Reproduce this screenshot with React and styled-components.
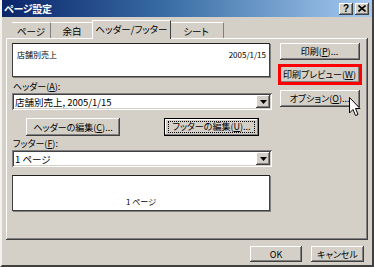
import React from 'react';
import styled, { createGlobalStyle } from 'styled-components';

const Global = createGlobalStyle`
  html, body { margin: 0; padding: 0; background: #D4D0C8; }
  body {
    font-family: "Noto Sans CJK JP", "Liberation Sans", sans-serif;
    font-size: 9px;
    color: #000;
    font-feature-settings: "palt" 1;
  }
  #root { width: 374px; height: 267px; }
`;

const raised = `
  box-shadow: inset -1px -1px #404040, inset 1px 1px #ffffff,
    inset -2px -2px #808080, inset 2px 2px #D4D0C8;
`;
const sunken = `
  box-shadow: inset 1px 1px #808080, inset -1px -1px #ffffff,
    inset 2px 2px #404040, inset -2px -2px #D4D0C8;
`;

const Window = styled.div`
  position: relative;
  width: 374px;
  height: 267px;
  box-sizing: border-box;
  background: #D4D0C8;
  border-left: 2px solid #f4f2ee;
  border-right: 2px solid #404040;
  border-bottom: 2px solid #404040;
  display: flex;
  flex-direction: column;
  overflow: hidden;
`;

const TitleBar = styled.div`
  height: 17px;
  flex: none;
  display: flex;
  align-items: center;
  padding: 0 3px 0 2px;
  background: linear-gradient(to right, #0A246A 0%, #3A6EA5 45%, #A6CAF0 100%);
`;

const Title = styled.div`
  flex: 1;
  color: #fff;
  font-weight: bold;
  font-size: 10px;
  letter-spacing: -0.3px;
`;

const CapButton = styled.div`
  width: 14px;
  height: 12px;
  margin-left: ${p => p.$ml || 1}px;
  background: #D4D0C8;
  ${raised}
  display: flex;
  align-items: center;
  justify-content: center;
  font-family: "Liberation Sans", sans-serif;
  font-weight: bold;
  font-size: 10px;
  line-height: 1;
`;

const TabStrip = styled.div`
  height: 19px;
  margin-top: 2px;
  padding-left: 10px;
  display: flex;
  align-items: flex-end;
  flex: none;
`;

const Tab = styled.div`
  position: relative;
  height: ${p => (p.$active ? 19 : 16)}px;
  width: ${p => p.$w}px;
  box-sizing: border-box;
  display: flex;
  align-items: center;
  justify-content: center;
  font-size: 9.5px;
  background: #D4D0C8;
  border-top: 1px solid #ffffff;
  border-left: ${p => (p.$active ? '1px solid #ffffff' : 'none')};
  border-right: 1px solid ${p => (p.$active ? '#404040' : '#808080')};
  margin-left: ${p => (p.$active ? '-2px' : '0')};
  margin-right: ${p => (p.$active ? '-2px' : '0')};
  margin-bottom: ${p => (p.$active ? '-1px' : '0')};
  z-index: ${p => (p.$active ? 2 : 1)};
  padding-bottom: ${p => (p.$active ? 2 : 0)}px;
`;

const Panel = styled.div`
  margin: 0 4px 0 4px;
  height: 202px;
  flex: none;
  box-sizing: border-box;
  background: #D4D0C8;
  ${raised}
  padding: 5px 5px 0 6px;
  display: flex;
  gap: 5px;
`;

const LeftCol = styled.div`
  width: 260px;
  display: flex;
  flex-direction: column;
`;

const RightCol = styled.div`
  width: 85px;
  display: flex;
  flex-direction: column;
  align-items: center;
`;

const Preview = styled.div`
  height: ${p => p.$h}px;
  width: 258px;
  box-sizing: border-box;
  background: #fff;
  border: 1px solid #404040;
  border-top-color: #202020;
  box-shadow: 1px 1px 0 #808080;
  display: flex;
  justify-content: space-between;
  align-items: ${p => (p.$center ? 'flex-end' : 'flex-start')};
  padding: ${p => (p.$center ? '0 0 3px 0' : '5px 3px 0 4px')};
  font-size: 8px;
  margin-top: ${p => p.$mt || 0}px;
`;

const CenterText = styled.span`
  flex: 1;
  text-align: center;
`;

const Label = styled.div`
  height: ${p => p.$h}px;
  display: flex;
  align-items: flex-end;
  font-size: 9px;
  line-height: 11px;
  padding-left: 1px;
`;

const Combo = styled.div`
  width: 260px;
  height: 17px;
  box-sizing: border-box;
  background: #fff;
  ${sunken}
  display: flex;
  align-items: center;
  padding: 2px 2px 2px 3px;
  margin-top: 1px;
  font-size: 9.5px;
`;

const ComboText = styled.span`
  flex: 1;
`;

const DropBtn = styled.div`
  width: 14px;
  height: 13px;
  background: #D4D0C8;
  ${raised}
  display: flex;
  align-items: center;
  justify-content: center;
`;

const EditRow = styled.div`
  display: flex;
  justify-content: space-between;
  padding: 0 13px 0 14px;
  margin-top: 8px;
`;

const Button = styled.div`
  width: ${p => p.$w}px;
  height: ${p => p.$h || 17}px;
  box-sizing: border-box;
  background: #D4D0C8;
  ${p =>
    p.$default
      ? `border: 1px solid #000; box-shadow: inset -1px -1px #808080, inset 1px 1px #ffffff;`
      : raised}
  display: flex;
  align-items: center;
  justify-content: center;
  font-size: 9px;
  margin-top: ${p => p.$mt || 0}px;
  outline: ${p => (p.$highlight ? '3px solid #ff0000' : 'none')};
  outline-offset: -1px;
  white-space: nowrap;
`;

const Focus = styled.span`
  border: 1px dotted #000;
  padding: 0 3px;
  line-height: 10px;
`;

const Footer = styled.div`
  display: flex;
  justify-content: flex-end;
  gap: 9px;
  padding: 6px 8px 0 0;
`;

const Cursor = styled.svg`
  position: absolute;
  left: 347px;
  top: 97px;
  z-index: 5;
`;

const Arrow = () => (
  <svg width="7" height="4" viewBox="0 0 7 4">
    <path d="M0 0 H7 L3.5 4 Z" fill="#000" />
  </svg>
);

export default function App() {
  return (
    <>
      <Global />
      <Window>
        <TitleBar>
          <Title>ページ設定</Title>
          <CapButton>?</CapButton>
          <CapButton $ml={2}>
            <svg width="8" height="7" viewBox="0 0 8 7">
              <path d="M0.5 0.5 L7.5 6.5 M7.5 0.5 L0.5 6.5" stroke="#000" strokeWidth="1.6" />
            </svg>
          </CapButton>
        </TitleBar>
        <TabStrip>
          <Tab $w={39}>ページ</Tab>
          <Tab $w={43}>余白</Tab>
          <Tab $w={79} $active>ヘッダー/フッター</Tab>
          <Tab $w={55}>シート</Tab>
        </TabStrip>
        <Panel>
          <LeftCol>
            <Preview $h={34}>
              <span>店舗別売上</span>
              <span>2005/1/15</span>
            </Preview>
            <Label $h={15}>ヘッダー(<u>A</u>):</Label>
            <Combo>
              <ComboText>店舗別売上, 2005/1/15</ComboText>
              <DropBtn><Arrow /></DropBtn>
            </Combo>
            <EditRow>
              <Button $w={94} $h={18}>ヘッダーの編集(<u>C</u>)...</Button>
              <Button $w={95} $h={18} $default>
                <Focus>フッターの編集(<u>U</u>)...</Focus>
              </Button>
            </EditRow>
            <Label $h={13}>フッター(<u>F</u>):</Label>
            <Combo>
              <ComboText>1 ページ</ComboText>
              <DropBtn><Arrow /></DropBtn>
            </Combo>
            <Preview $h={36} $mt={8} $center>
              <CenterText>1 ページ</CenterText>
            </Preview>
          </LeftCol>
          <RightCol>
            <Button $w={80}>印刷(<u>P</u>)...</Button>
            <Button $w={80} $mt={6} $highlight>印刷プレビュー(<u>W</u>)</Button>
            <Button $w={80} $mt={7}>オプション(<u>O</u>)...</Button>
          </RightCol>
        </Panel>
        <Footer>
          <Button $w={52} $h={16}>OK</Button>
          <Button $w={53} $h={16}>キャンセル</Button>
        </Footer>
        <Cursor width="12" height="20" viewBox="0 0 12 20">
          <path d="M0.5 0.5 V16 L4 12.5 L6.5 18.5 L9 17.5 L6.5 11.5 H11 Z" fill="#fff" stroke="#000" strokeWidth="1" />
        </Cursor>
      </Window>
    </>
  );
}
